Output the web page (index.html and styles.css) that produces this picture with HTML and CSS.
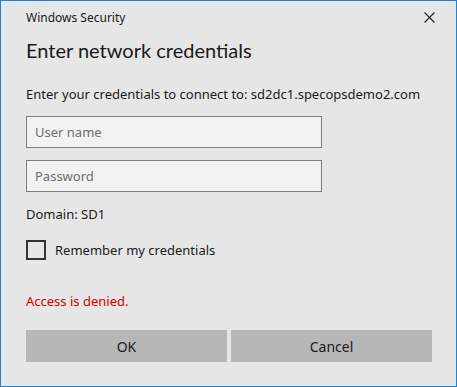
FILE: index.html
```html
<!DOCTYPE html>
<html lang="en">
<head>
  <meta charset="UTF-8">
  <title>Windows Security</title>
  <link rel="stylesheet" href="styles.css">
</head>
<body>
  <div class="window">
    <div class="titlebar">
      <span class="title">Windows Security</span>
      <svg class="close" width="11" height="11" viewBox="0 0 11 11">
        <path d="M0.5 0.5 L10.5 10.5 M10.5 0.5 L0.5 10.5" stroke="#222" stroke-width="1.1" fill="none"/>
      </svg>
    </div>
    <h1>Enter network credentials</h1>
    <p class="desc">Enter your credentials to connect to: sd2dc1.specopsdemo2.com</p>
    <input type="text" class="field" placeholder="User name">
    <input type="password" class="field" placeholder="Password">
    <p class="domain">Domain: SD1</p>
    <label class="remember">
      <span class="box"></span>
      <span>Remember my credentials</span>
    </label>
    <p class="error">Access is denied.</p>
    <div class="buttons">
      <button type="button" class="btn">OK</button>
      <button type="button" class="btn">Cancel</button>
    </div>
  </div>
</body>
</html>
```

FILE: styles.css
```css
body {
  margin: 0;
  font-family: "Noto Sans", "Open Sans", sans-serif;
  color: #1a1a1a;
}

.window {
  width: 457px;
  height: 387px;
  box-sizing: border-box;
  border: 1px solid #1883d7;
  background-color: #e6e6e6;
  padding: 0 24px 0 25px;
}

.titlebar {
  display: flex;
  justify-content: space-between;
  align-items: center;
  height: 32px;
  margin-right: -3px;
}

.title {
  font-size: 12px;
}

.close {
  display: block;
}

h1 {
  margin: 0;
  padding-top: 3px;
  font-family: Lato, "Noto Sans", sans-serif;
  font-size: 20px;
  font-weight: normal;
  line-height: 28px;
}

.desc {
  margin: 21px 0 0;
  font-size: 13px;
  line-height: 18px;
}

.field {
  display: block;
  width: 296px;
  height: 32px;
  box-sizing: border-box;
  margin-top: 13px;
  padding: 0 8px;
  border: 1px solid #7e7e7e;
  background-color: #f2f2f2;
  font-family: inherit;
  font-size: 13px;
}

.field::placeholder {
  color: #6d6d6d;
}

.field + .field {
  margin-top: 12px;
}

.domain {
  margin: 13px 0 0;
  font-size: 13px;
  line-height: 18px;
}

.remember {
  display: flex;
  align-items: center;
  gap: 9px;
  margin-top: 17px;
  font-size: 13px;
}

.box {
  width: 20px;
  height: 20px;
  box-sizing: border-box;
  border: 2px solid #333;
}

.error {
  margin: 32px 0 0;
  color: #d30000;
  font-size: 13px;
  line-height: 18px;
}

.buttons {
  display: flex;
  gap: 4px;
  margin-top: 20px;
}

.btn {
  flex: 1;
  height: 32px;
  border: none;
  background-color: #b7b7b7;
  font-family: inherit;
  font-size: 14px;
  color: #1a1a1a;
}
```
